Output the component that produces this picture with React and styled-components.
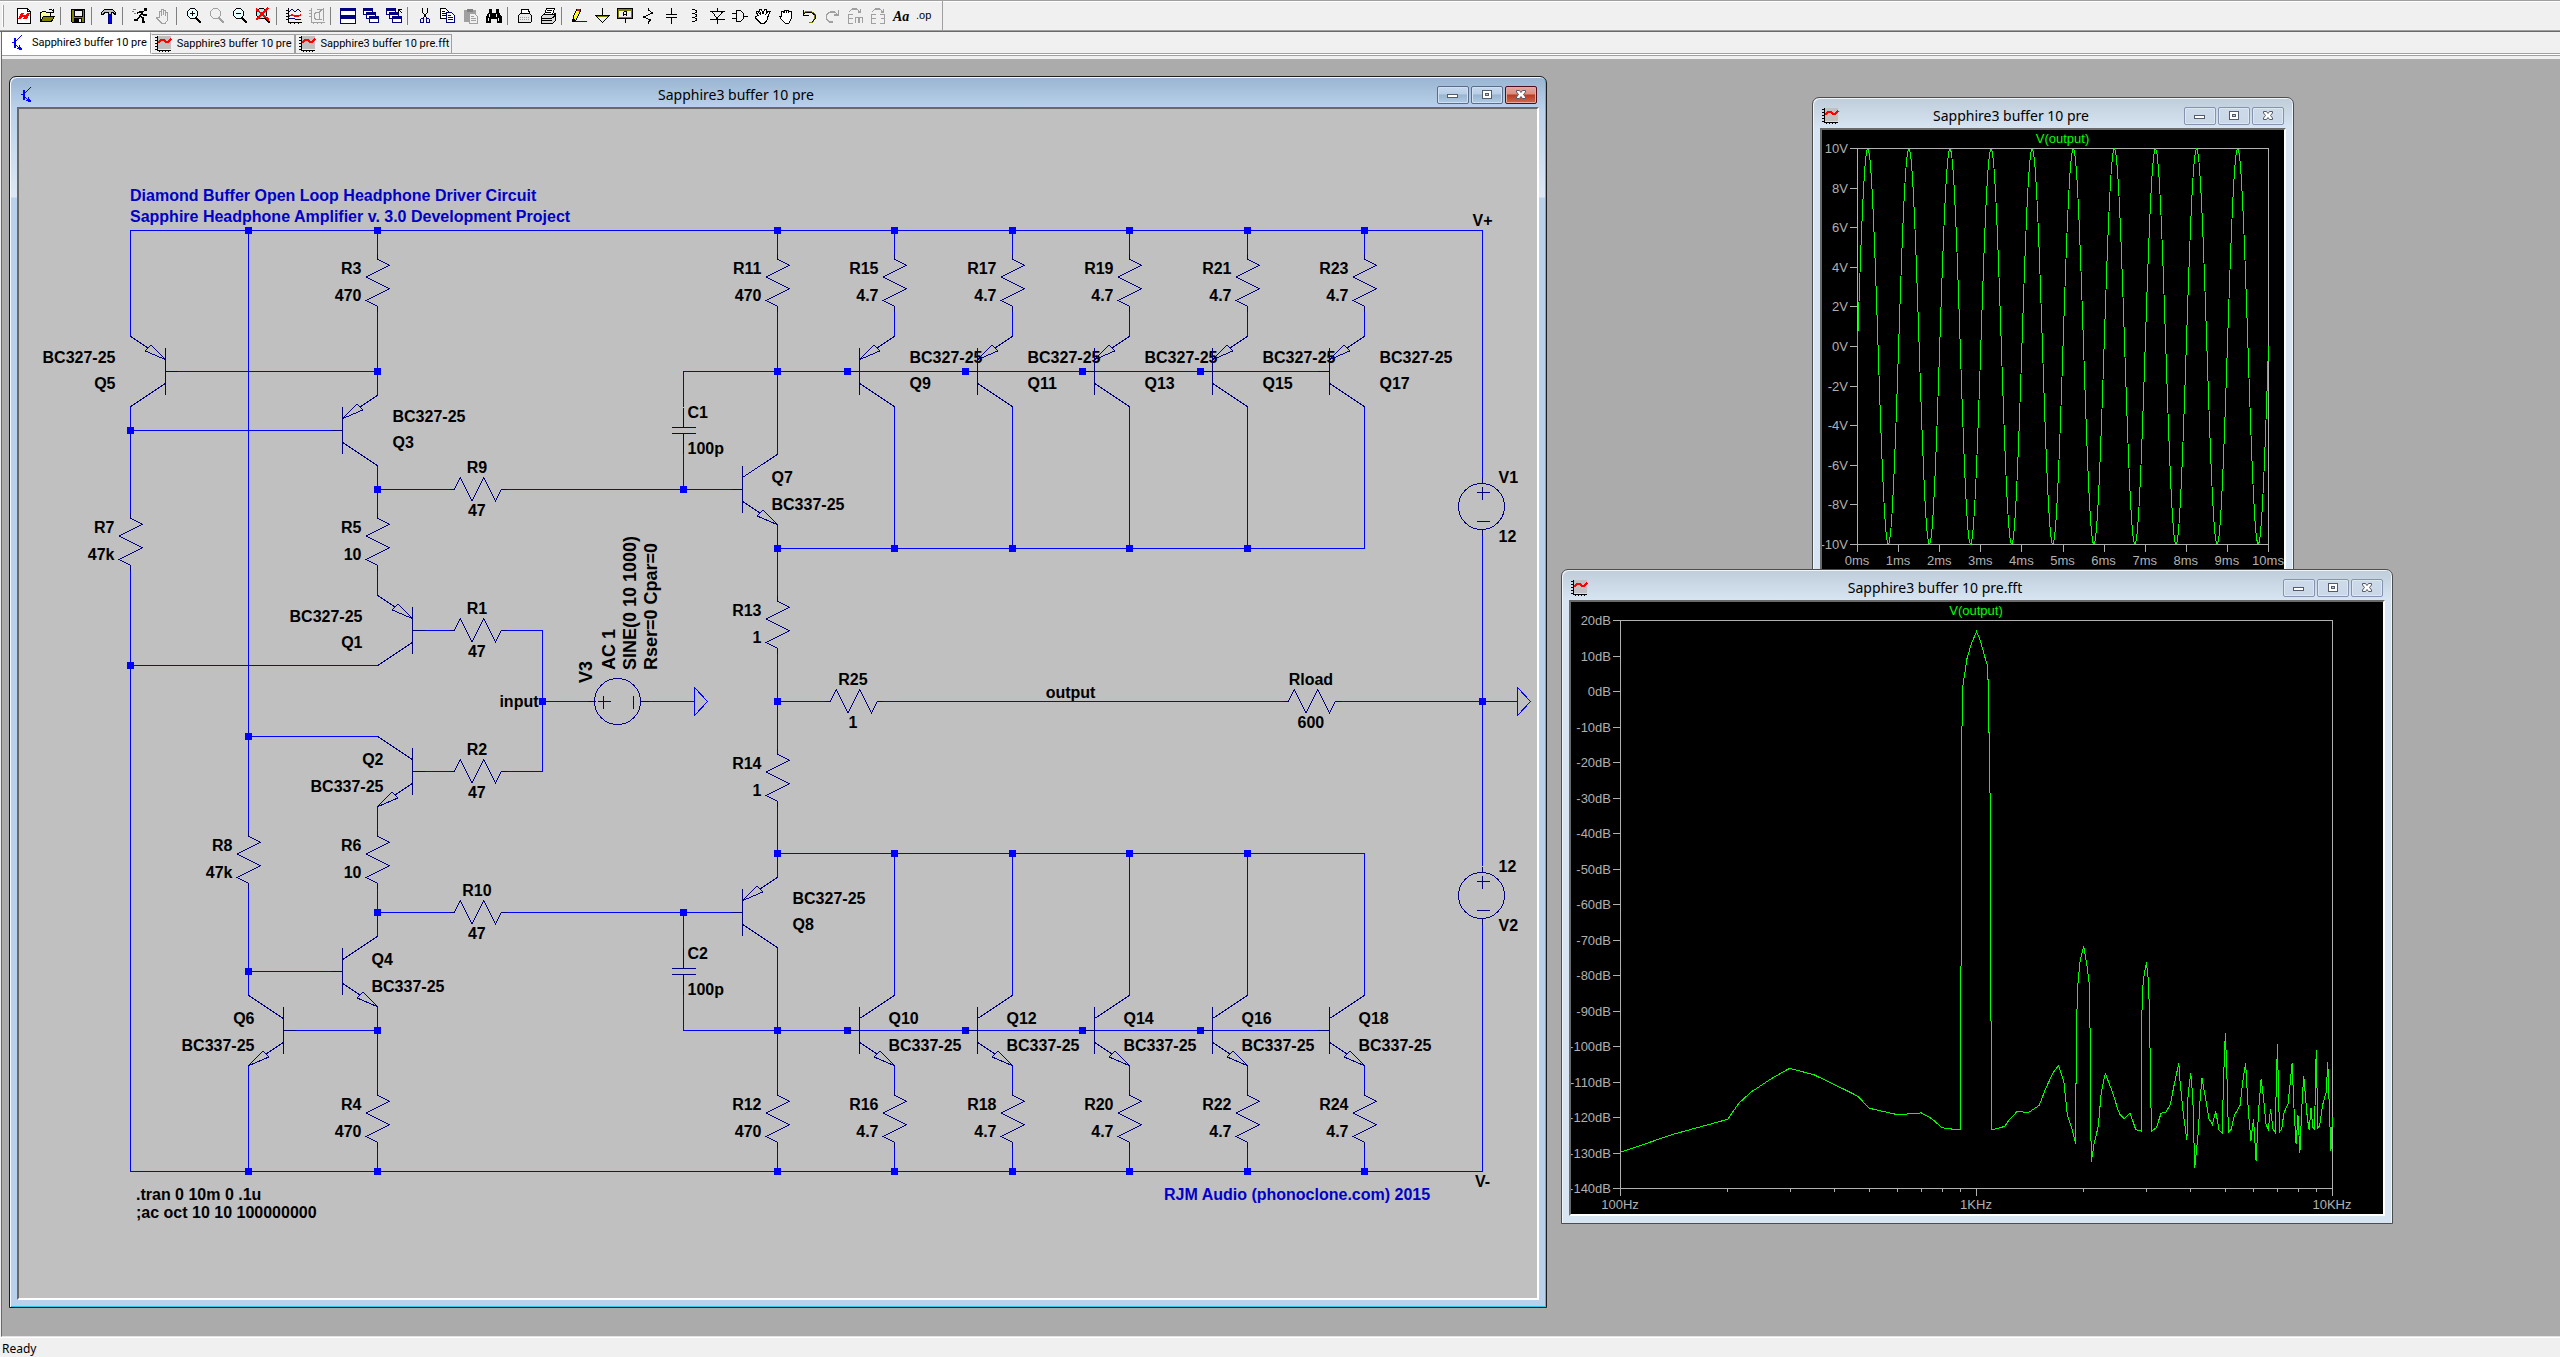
import React from "react";
import styled, { createGlobalStyle, css } from "styled-components";

const GlobalStyle = createGlobalStyle`
  *, *::before, *::after { box-sizing: border-box; }
  body { margin: 0; background: #f0f0f0; overflow: hidden; }
  button { font: inherit; color: inherit; padding: 0; margin: 0; }
`;

const uiFont = `"Noto Sans", "Open Sans", sans-serif`;
const plainFont = `"Liberation Sans", Arial, sans-serif`;

/* ---------- application shell ---------- */

const Shell = styled.div`
  display: flex;
  flex-direction: column;
  height: 100vh;
  background: #f0f0f0;
  font-family: ${uiFont};
  color: #000;
`;

const ToolbarRow = styled.header`
  display: flex;
  height: 32px;
  border-top: 1px solid #a0a0a0;
  border-bottom: 1px solid #696969;
  box-shadow: inset 0 1px 0 #fff, inset 0 -1px 0 #a0a0a0;
`;

const Toolbar = styled.div`
  display: flex;
  align-items: center;
  padding: 0 7px 0 2px;
  border-right: 1px solid #a0a0a0;
`;

const Grip = styled.span`
  width: 2px;
  height: 22px;
  margin-right: 8px;
  background: #fff;
  border-right: 1px solid #a0a0a0;
`;

const ToolButton = styled.button`
  display: flex;
  align-items: center;
  justify-content: center;
  width: 23px;
  height: 22px;
  border: 0;
  background: transparent;
`;

const Separator = styled.span`
  width: 1px;
  height: 18px;
  margin: 0 5px 0 2px;
  background: #808080;
`;

const Icon = styled.svg`
  display: block;
  width: 16px;
  height: 16px;
  flex: none;
  shape-rendering: crispEdges;
  fill: none;
  overflow: visible;
`;

const TabStrip = styled.nav`
  display: flex;
  align-items: flex-start;
  height: 27px;
  margin-left: 1px;
  border-left: 1px solid #696969;
  background: linear-gradient(
    #f0f0f0 21px, #a0a0a0 21px, #a0a0a0 22px, #fff 22px, #fff 23px,
    #a0a0a0 23px, #a0a0a0 24px, #f0f0f0 24px
  );
`;

const Tab = styled.button`
  display: flex;
  align-items: center;
  gap: 6px;
  font-family: Roboto, ${plainFont};
  font-size: 11px;
  line-height: 16px;
  white-space: nowrap;
  border: 1px solid #a0a0a0;
  ${(p) =>
    p.$active
      ? css`
          height: 22px;
          padding: 0 3px 0 7px;
          border-color: #fff #a0a0a0 #fff #fff;
          background: #fff;
        `
      : css`
          height: 20px;
          margin-top: 2px;
          padding: 0 2px 0 3px;
          border-left-color: ${p.$first ? "#fff" : "#a0a0a0"};
          background: #f0f0f0;
        `}
`;

const Desktop = styled.main`
  position: relative;
  flex: 1;
  overflow: hidden;
  margin-left: 1px;
  background: #ababab;
  border-left: 1px solid #696969;
  border-bottom: 1px solid #e3e3e3;
`;

const StatusBar = styled.footer`
  height: 20px;
  padding: 2px 2px 0;
  border-top: 1px solid #fff;
  font-size: 12px;
  line-height: 18px;
`;

/* ---------- MDI windows ---------- */

const Frame = styled.section`
  position: absolute;
  left: ${(p) => p.$x}px;
  top: ${(p) => p.$y}px;
  width: ${(p) => p.$w}px;
  height: ${(p) => p.$h}px;
  display: flex;
  flex-direction: column;
  padding: 0 7px 7px;
  border-radius: 7px 7px 0 0;
  ${(p) =>
    p.$active
      ? css`
          border: 1px solid #1c1c1c;
          background: linear-gradient(#99b4d1, #b9d1ea 30px, #dce8f5 120px, #b9d1ea 121px);
          box-shadow: inset 1px 1px 0 #f4f9ff, inset -1px -1px 0 #2fc6ec;
        `
      : css`
          border: 1px solid #4d4d4d;
          background: linear-gradient(#bfcddb, #d7e4f2 30px);
          box-shadow: inset 1px 1px 0 #f0f5fb, inset -1px 0 0 #f0f5fb;
        `}
`;

const TitleBar = styled.div`
  display: flex;
  align-items: center;
  height: 30px;
  flex: none;
  padding: 9px 2px 3px;
`;

const Title = styled.h2`
  flex: 1;
  margin: 0;
  text-align: center;
  font-size: 14px;
  line-height: 18px;
  font-weight: 400;
`;

const Controls = styled.div`
  display: flex;
  gap: 2px;
`;

const ControlButton = styled.button`
  display: flex;
  align-items: center;
  justify-content: center;
  width: 32px;
  height: 18px;
  border-radius: 2px;
  ${(p) =>
    p.$tone === "close"
      ? css`
          border: 1px solid #4f0e1c;
          background: linear-gradient(#e3a299 0 1px, #dc8d80 7px, #b93a20 8px, #cf6a55 16px);
          box-shadow: inset 0 0 0 1px #e6a99f;
        `
      : p.$tone === "active"
      ? css`
          border: 1px solid #5b6c8a;
          background: linear-gradient(#c6d9ed, #b8cee6 7px, #98b4d0 8px, #b1cbe4 16px);
          box-shadow: inset 0 0 0 1px #d2e1f1;
        `
      : css`
          border: 1px solid #8593b0;
          background: linear-gradient(#ccdaea, #c9d7e7);
          box-shadow: inset 0 0 0 1px #dce7f3;
        `}
`;

const Client = styled.div`
  flex: 1;
  min-height: 0;
  border: 2px solid;
  border-color: #696969 #fff #fff #696969;
  background: ${(p) => p.$bg};
`;

const Drawing = styled.svg`
  display: block;
  width: 100%;
  height: 100%;
`;

const glyphs = {
  minimize: <path d="M2.500 7.500h10v3h-10z" fill="#fff" stroke="#535a6c" />,
  maximize: (
    <>
      <path d="M3.500 3.500h9v8h-9z" fill="#fff" stroke="#535a6c" />
      <path d="M6.500 6.500h3v2h-3z" fill="#b8cbe0" stroke="#535a6c" />
    </>
  ),
  close: (
    <path
      d="M3.500 3.500h3L8 5.500l1.500-2h3v1.500L10.500 7.500l2 2.500v1.500h-3L8 9.500l-1.500 2h-3V10l2-2.500-2-2.500z"
      fill="#fff"
      stroke="#535a6c"
      shapeRendering="auto"
    />
  ),
};

function MdiWindow({ title, icon, active, bg, x, y, w, h, children }) {
  const tone = active ? "active" : "idle";
  return (
    <Frame $x={x} $y={y} $w={w} $h={h} $active={active} aria-label={title}>
      <TitleBar>
        <Icon viewBox="0 0 16 16">{icon}</Icon>
        <Title>{title}</Title>
        <Controls>
          <ControlButton $tone={tone} aria-label="Minimize">
            <Icon viewBox="0 0 16 16">{glyphs.minimize}</Icon>
          </ControlButton>
          <ControlButton $tone={tone} aria-label="Maximize">
            <Icon viewBox="0 0 16 16">{glyphs.maximize}</Icon>
          </ControlButton>
          <ControlButton $tone={active ? "close" : "idle"} aria-label="Close">
            <Icon viewBox="0 0 16 16">{glyphs.close}</Icon>
          </ControlButton>
        </Controls>
      </TitleBar>
      <Client $bg={bg}>{children}</Client>
    </Frame>
  );
}

/* ---------- icons ---------- */

const schematicIcon = (
  <>
    <path d="M2 7.500h4M5.500 6.500l6-6M5.500 9.500l6 6" stroke="#00f" />
    <path d="M4 3h2v10H4zM9 10h1v2h1v1h1v2h-3v-1h-2v-1h1v-1h1z" fill="#00f" />
  </>
);

const plotIcon = (
  <>
    <path d="M2 0h14v13H2z" fill="#c0c0c0" />
    <path d="M2 0v14h14M0 1.500h2M0 4.500h2M0 7.500h2M0 10.500h2M0 13.500h2M4.500 14v2M7.500 14v2M10.500 14v2M13.500 14v2" stroke="#000" />
    <path d="M3 7l3-3h3l2 2h2l3-3" stroke="#f00" strokeWidth="2" />
  </>
);

const G = "#a0a0a0";
const N = "#000080";

const lens = (color, tint) => (
  <>
    <path d="M4.500 .5h4l3 3v4l-3 3h-4l-3-3v-4z" stroke={color} fill={tint} />
    <path d="M10 10l5 5" stroke={color} strokeWidth="2.500" />
  </>
);

const cascade = (
  <>
    {[[0, 0], [3, 4], [6, 8]].map(([x, y]) => (
      <g key={x}>
        <path d={`M${x + 0.5} ${y + 0.5}h9v6h-9z`} fill="#fff" stroke={N} />
        <path d={`M${x} ${y}h10v3h-10z`} fill={N} />
      </g>
    ))}
  </>
);

const page = (x, y, fill, color) => (
  <>
    <path d={`M${x + 0.5} ${y + 0.5}h5l3 3v7h-8z`} fill={fill} stroke={color} />
    <path d={`M${x + 2} ${y + 3.5}h3M${x + 2} ${y + 5.5}h5M${x + 2} ${y + 7.5}h5`} stroke={color} />
  </>
);

const toolGroups = [
  [
    ["New schematic", <><path d="M1.500 .5h10l3 3v12h-13z" fill="#fff" stroke="#000" /><path d="M11.500 .5v3h3" stroke="#000" /><path d="M2 11l3-6h3l-1 2h2l2-2h3l-3 6h-4l1-2H6l-1 2z" fill="#f00" /></>],
    ["Open", <><path d="M1.500 13V4.500h1l1-1h3l1 1h4v3" fill="#ff9" stroke="#000" /><path d="M1.500 13.500l3-5h11l-3 5z" fill="#808000" stroke="#000" /><path d="M9.500 2.500l1-1h2l2 2M14.500 1v3h-3" stroke="#000" /></>],
  ],
  [["Save", <><path d="M1.500 1.500h13v13h-12l-1-1z" fill="#808000" stroke="#000" /><path d="M4 2h8v6H4z" fill="#f0f0f0" stroke="#000" /><path d="M4 10h8v5H4z" fill="#000" /><path d="M9 11h2v3H9z" fill="#f0f0f0" /></>]],
  [["Control panel", <><path d="M.5 4.500l3-3h8l3 3v2h-1l-1-2H10v2H7v-2H4l-2 2h-1z" fill="#c0c0c0" stroke="#000" /><path d="M7.500 6.500h3v9h-3z" fill="#00f" stroke={N} /></>]],
  [
    ["Run", <><path d="M12 0h3v3h-3z" fill="#000" /><path d="M11 3L8 8l3 2v4h2M8 8l-3 4H2M5 5l3-1 4 3h3M8 4h3" stroke="#000" strokeWidth="1.500" /><path d="M0 3h2M2 5h2M1 1h3" stroke="#808080" /></>],
    ["Halt", <><path d="M4.500 9V3.500h2V8M6.500 7V1.500h2V7M8.500 7V2.500h2V8M10.500 8V4.500h2V12l-2 3h-4l-5-5v-1h2l1 1" stroke={G} /></>],
  ],
  [
    ["Zoom in", <>{lens("#000", "#e4ffff")}<path d="M6.500 3v5M4 5.500h5" stroke="#000" strokeWidth="1.500" /></>],
    ["Pan", lens(G, "#f0f0f0")],
    ["Zoom out", <>{lens("#000", "#e4ffff")}<path d="M4 5.500h5" stroke="#000" strokeWidth="1.500" /></>],
    ["Zoom full extents", <>{lens("#000", "#8ff")}<path d="M1 1l13 11M13 0L1 12" stroke="#f00" strokeWidth="2" /></>],
  ],
  [
    ["Autorange", <><path d="M2 0v14h14M0 2.500h2M0 5.500h2M0 8.500h2M0 11.500h2M4.500 14v2M8.500 14v2M12.500 14v2" stroke="#000" /><path d="M3 4l3-3 3 3 3-3 3 3" stroke={N} /><path d="M3 8l3-1 3 1h3l3-1" stroke="#f00" strokeWidth="1.500" /><path d="M3 10.500h5l2 1h5" stroke={N} /></>],
    ["Plot limits", <><path d="M2 0v14h14M0 2.500h2M0 5.500h2M0 8.500h2M4.500 14v2M8.500 14v2M12.500 14v2M14.500 0v13M8 1.500h5l-3 3h-3l-2 2v3l2 2h6M10 4.500v6" stroke={G} /></>],
  ],
  [
    ["Tile windows", <><path d="M.5 .5h15v7H.5zM.5 8.500h15v7H.5z" fill="#fff" stroke={N} /><path d="M0 0h16v3H0zM0 8h16v3H0z" fill={N} /></>],
    ["Cascade windows", cascade],
    ["Close all", <>{cascade}<path d="M12 1.500h4M12.500 1v4M12 1l4 4" stroke="#000" /></>],
  ],
  [
    ["Cut", <><path d="M5.500 0v4l4 6M10.500 0v4l-4 6" stroke="#000" /><path d="M4.500 10.500h2v4h-3v-3zM9.500 10.500h2l1 1v3h-3z" stroke={N} /></>],
    ["Copy", <>{page(0, 0, "#fff", "#000")}{page(6, 4, "#fff", N)}</>],
    ["Paste", <><path d="M1 2h12v12H1z" fill={G} /><path d="M4 1h6v3H4z" fill="#808080" />{page(6, 5, "#f0f0f0", G)}</>],
    ["Find", <><path d="M3 1h3v4h4V1h3v3l3 5v6h-5v-4H5v4H0V9l3-5z" fill="#000" /><path d="M3.500 6v3M2.500 10v3M10.500 6v3M12.500 10v3" stroke="#f0f0f0" /></>],
  ],
  [
    ["Print setup", <><path d="M4.500 5.500v-4h7l1 4" fill="#fff" stroke="#000" /><path d="M1.500 7.500l2-2h9l2 2v6l-1 1h-12z" fill="#e8e8e8" stroke="#000" /><path d="M3 9.500h10M3 11.500h10" stroke="#a0a0a0" strokeDasharray="1 1" /></>],
    ["Print", <><path d="M4.500 6.500l2-6h8l-2 6" fill="#fff" stroke="#000" /><path d="M7 2.500h5M6 4.500h5" stroke="#000" /><path d="M1.500 8.500l2-2h10l2-1v7l-3 3h-11z" fill="#d8d8d8" stroke="#000" /><path d="M2 10.500h10M2 12.500h10M12.500 10l3-3" stroke="#000" /></>],
  ],
  [
    ["Wire", <><path d="M2 13.500h14" stroke="#00f" /><path d="M2 12V9l4-8h3v3l-4 8z" fill="#ff0" stroke="#000" /><path d="M6 1h3v3L6 3z" fill="#f00" /><path d="M1 11h3v3H1z" fill="#000" /></>],
    ["Ground", <><path d="M8.500 0v7" stroke="#000" /><path d="M1.500 7.500h14l-7 7z" fill="#f0f0f0" stroke="#000" /><path d="M3 8.500h11" stroke="#808000" /></>],
    ["Label net", <><path d="M1 1.500h14v8H1z" stroke="#808000" strokeWidth="2" /><path d="M.5 .5h15v10H.5zM8 11v4M6.500 8V4.500l1-1h2V8M6 6h4" stroke="#000" /></>],
    ["Resistor", <path d="M8.500 0v2l4 3-9 4 7 3-2 2v2" stroke="#000" />],
    ["Capacitor", <path d="M8.500 0v6M3 6.500h11M3 9.500h11M8.500 10v6" stroke="#000" />],
    ["Inductor", <path d="M6 1.500h2l2 1v2l-2 1H6h2l2 1v2l-2 1H6h2l2 1v2l-2 1H6" stroke="#000" />],
    ["Diode", <><path d="M8.500 0v3M1 3.500h15M3 3.500l5 7 6-7M1 11.500h15M8.500 12v4" stroke="#000" /></>],
    ["Component", <path d="M0 5.500h4M0 10.500h4M4.500 2.500h4l3 3v5l-3 3h-4zM12 8.500h4" stroke="#000" />],
    ["Move", <path d="M3.500 7.500L1.500 5V3.500H3L5.500 6.500l-1-5h2l1.500 4 1.500-4h2l-.5 4.500 2-2.500h2l-2 5-1 4-3 3h-3l-6-6v-1.500h2z" fill="#fff" stroke="#000" />],
    ["Drag", <path d="M3.500 8.500V4l1.500-1 1 2V2.500h2V5l1-3h1.500V5l1-2h1.500v8l-2 4h-4l-4-4-1-2.500z" fill="#fff" stroke="#000" />],
    ["Undo", <><path d="M2 6.500l3-3h5l4 3v4l-3 4h-3" stroke="#808000" strokeWidth="1.500" /><path d="M2.500 2v5.500h5M2 7l3-3h5l4 3v4l-3 3" stroke="#000" /></>],
    ["Redo", <path d="M14.500 2v5h-5M14 7l-3-3H6L2.500 7v4l3 3h3" stroke={G} strokeWidth="1.300" />],
    ["Mirror", <path d="M2 4l3-3h5l3 3M13.500 1v3h-3M6 6.500H1.500v9H6M1.500 10.500h4M8.500 15V9.500h7V15M12 9v6" stroke={G} strokeWidth="1.300" />],
    ["Rotate", <path d="M2 4l3-3h5l3 3M13.500 1v3h-3M6 6.500H1.500v9H6M1.500 10.500h4M10 6.500h4.500v9H10M14.500 10.500h-4" stroke={G} strokeWidth="1.300" />],
    ["Text", <text x="0" y="13" fill="#000" fontFamily="'Liberation Serif', serif" fontSize="14" fontWeight="700" fontStyle="italic">Aa</text>],
    ["SPICE directive", <text x="0" y="11" fill="#000" fontFamily="'Liberation Sans', sans-serif" fontSize="11">.op</text>],
  ],
];

/* ---------- schematic ---------- */

const WIRE = "#0000ff";
const PART = "#000080";
const STEP_X = 11.75;
const STEP_Y = 200 / 17;
const gx = (c) => Math.round(111.3 + c * STEP_X) + 0.5;
const gy = (r) => Math.round(120.95 + r * STEP_Y) + 0.5;
// component outlines are given in 1/16 of a grid step
const u = (n) => (n * STEP_X) / 16;

const Label = styled.text`
  font-family: ${plainFont};
  font-size: ${(p) => (p.$large ? 18 : 16)}px;
  font-weight: 700;
  fill: ${(p) => p.$fill || "#000"};
  stroke: none;
  text-anchor: ${(p) => p.$anchor || "start"};
`;

const poly = (ox, oy, pts) =>
  "M" + pts.map(([x, y]) => `${(ox + u(x)).toFixed(2)} ${(oy + u(y)).toFixed(2)}`).join("L");

const ZIG = [[0, 0], [0, 8], [16, 16], [-16, 32], [16, 48], [-16, 64], [0, 72], [0, 80]];

function ResistorV({ c, r, name, value }) {
  const x = gx(c), y = gy(r);
  return (
    <g>
      <path d={poly(x, y, ZIG)} />
      <Label x={x - 16} y={y + 20} $anchor="end">{name}</Label>
      <Label x={x - 16} y={y + 47} $anchor="end">{value}</Label>
    </g>
  );
}

function ResistorH({ c, r, name, value }) {
  const x = gx(c), y = gy(r);
  return (
    <g>
      <path d={poly(x, y, ZIG.map(([a, b]) => [b, -a]))} />
      <Label x={x + u(40) - 1} y={y - 17} $anchor="middle">{name}</Label>
      <Label x={x + u(40) - 1} y={y + 26} $anchor="middle">{value}</Label>
    </g>
  );
}

// c,r: base pin; dir 1 puts collector and emitter to the right of the base
function Transistor({ c, r, dir = 1, pnp, name }) {
  const x = gx(c), y = gy(r);
  const m = (pts) => pts.map(([a, b]) => [a * dir, b]);
  const e = pnp ? -1 : 1;
  const head = pnp
    ? [[16, -16], [36, -36], [44, -28], [16, -16]]
    : [[64, 48], [44, 28], [36, 36], [64, 48]];
  const shaft = pnp ? [[64, -48], [40, -32]] : [[16, 16], [40, 32]];
  const tx = x + dir * (u(64) + (pnp ? 15 : -6));
  const anchor = dir > 0 ? "start" : "end";
  const model = pnp ? "BC327-25" : "BC337-25";
  return (
    <g>
      <path d={poly(x, y, m([[0, 0], [16, 0]]))} />
      <path d={poly(x, y, m([[16, -32], [16, 32]]))} />
      <path d={poly(x, y, m([[16, -16 * e], [64, -48 * e]]))} />
      <path d={poly(x, y, m(shaft))} />
      <path d={poly(x, y, m(head))} />
      <Label x={tx} y={pnp ? y - 9 : y - 7} $anchor={anchor}>{pnp ? model : name}</Label>
      <Label x={tx} y={pnp ? y + 17 : y + 20} $anchor={anchor}>{pnp ? name : model}</Label>
    </g>
  );
}

function Capacitor({ c, r, name, value }) {
  const x = gx(c), y = gy(r);
  return (
    <g>
      <path d={`M${x} ${y - 23}v20M${x - 12} ${y - 3}h24M${x - 12} ${y + 3}h24M${x} ${y + 3}v20`} />
      <Label x={x + 4} y={y - 13}>{name}</Label>
      <Label x={x + 4} y={y + 23}>{value}</Label>
    </g>
  );
}

function Source({ x, y, horizontal }) {
  return (
    <g>
      <circle cx={x - 1} cy={y} r="23" />
      {horizontal ? (
        <path d={`M${x - 31} ${y}h8M${x + 22} ${y}h8M${x - 21} ${y}h13M${x - 15} ${y - 6}v13M${x + 15} ${y - 6}v13`} />
      ) : (
        <path d={`M${x} ${y - 29}v6M${x} ${y + 23}v6M${x - 6} ${y - 14}h13M${x} ${y - 20}v13M${x - 6} ${y + 15}h13`} />
      )}
    </g>
  );
}

const legs = [65, 75, 85, 95, 105];

const wires = [
  [0, 0, 115, 0], [0, 80, 115, 80],
  [0, 0, 0, 9], [0, 15, 0, 24], [0, 29, 0, 80],
  [10, 0, 10, 51], [10, 56, 10, 65], [10, 71, 10, 80],
  [21, 0, 21, 2], [21, 7, 21, 14], [21, 20, 21, 24], [21, 29, 21, 31],
  [21, 49, 21, 51], [21, 56, 21, 60], [21, 66, 21, 73], [21, 78, 21, 80],
  [4, 12, 21, 12], [0, 17, 17, 17], [0, 37, 21, 37], [10, 43, 21, 43], [10, 63, 17, 63], [14, 68, 21, 68],
  [21, 22, 27, 22], [32, 22, 51, 22], [21, 58, 27, 58], [32, 58, 51, 58],
  [25, 34, 27, 34], [32, 34, 35, 34], [35, 34, 35, 46], [32, 46, 35, 46], [25, 46, 27, 46],
  [35, 40, 39, 40], [44, 40, 48, 40],
  [47, 12, 47, 15], [47, 19, 47, 22], [47, 58, 47, 61], [47, 65, 47, 68],
  [55, 0, 55, 2], [55, 7, 55, 19], [55, 25, 55, 31], [55, 36, 55, 44], [55, 49, 55, 55],
  [55, 61, 55, 73], [55, 78, 55, 80],
  [47, 12, 101, 12], [47, 68, 101, 68], [55, 27, 105, 27], [55, 53, 105, 53],
  [55, 40, 59, 40], [64, 40, 98, 40], [103, 40, 118, 40],
  [115, 0, 115, 21], [115, 26, 115, 54], [115, 59, 115, 80],
  ...legs.flatMap((c) => [
    [c, 0, c, 2], [c, 7, c, 9], [c, 15, c, 27], [c, 53, c, 65], [c, 71, c, 73], [c, 78, c, 80],
  ]),
];

const junctions = [
  ...[10, 21, 55, ...legs].flatMap((c) => [[c, 0], [c, 80]]),
  ...[55, 65, 75, 85, 95].flatMap((c) => [[c, 27], [c, 53]]),
  ...[55, 61, 71, 81, 91].flatMap((c) => [[c, 12], [c, 68]]),
  [21, 12], [0, 17], [21, 22], [47, 22], [0, 37], [35, 40], [55, 40], [115, 40],
  [10, 43], [21, 58], [47, 58], [10, 63], [21, 68],
];

function Schematic() {
  const v3x = gx(41.5), v3y = gy(40);
  const vx = gx(115);
  return (
    <Drawing viewBox="0 0 1518 1189" role="img" aria-label="Diamond buffer schematic">
      <g fill="none" shapeRendering="crispEdges" stroke={WIRE}>
        {wires.map(([a, b, c, d], i) => (
          <path key={i} d={`M${gx(a)} ${gy(b)}L${gx(c)} ${gy(d)}`} strokeLinecap="square" />
        ))}
        {[48, 118].map((c) => (
          <path key={c} d={`M${gx(c)} ${v3y - 14}v28l13 -14z`} />
        ))}
        {junctions.map(([c, r], i) => (
          <rect key={i} x={gx(c) - 3.5} y={gy(r) - 3.5} width="7" height="7" fill={WIRE} stroke="none" />
        ))}
      </g>
      <g fill="none" stroke={PART} shapeRendering="crispEdges">
        <ResistorV c={21} r={2} name="R3" value="470" />
        <ResistorV c={0} r={24} name="R7" value="47k" />
        <ResistorV c={21} r={24} name="R5" value="10" />
        <ResistorV c={10} r={51} name="R8" value="47k" />
        <ResistorV c={21} r={51} name="R6" value="10" />
        <ResistorV c={21} r={73} name="R4" value="470" />
        <ResistorV c={55} r={2} name="R11" value="470" />
        <ResistorV c={55} r={31} name="R13" value="1" />
        <ResistorV c={55} r={44} name="R14" value="1" />
        <ResistorV c={55} r={73} name="R12" value="470" />
        <ResistorH c={27} r={22} name="R9" value="47" />
        <ResistorH c={27} r={34} name="R1" value="47" />
        <ResistorH c={27} r={46} name="R2" value="47" />
        <ResistorH c={27} r={58} name="R10" value="47" />
        <ResistorH c={59} r={40} name="R25" value="1" />
        <ResistorH c={98} r={40} name="Rload" value="600" />
        <Transistor c={4} r={12} dir={-1} pnp name="Q5" />
        <Transistor c={17} r={17} pnp name="Q3" />
        <Transistor c={25} r={34} dir={-1} pnp name="Q1" />
        <Transistor c={25} r={46} dir={-1} name="Q2" />
        <Transistor c={17} r={63} name="Q4" />
        <Transistor c={14} r={68} dir={-1} name="Q6" />
        <Transistor c={51} r={22} name="Q7" />
        <Transistor c={51} r={58} pnp name="Q8" />
        {legs.map((c, i) => (
          <g key={c}>
            <ResistorV c={c} r={2} name={`R${15 + 2 * i}`} value="4.7" />
            <ResistorV c={c} r={73} name={`R${16 + 2 * i}`} value="4.7" />
            <Transistor c={c - 4} r={12} pnp name={`Q${9 + 2 * i}`} />
            <Transistor c={c - 4} r={68} name={`Q${10 + 2 * i}`} />
          </g>
        ))}
        <Capacitor c={47} r={17} name="C1" value="100p" />
        <Capacitor c={47} r={63} name="C2" value="100p" />
        <Source x={vx} y={gy(23.5)} />
        <Source x={vx} y={gy(56.5)} />
        <Source x={v3x} y={v3y} horizontal />
      </g>
      <Label x={vx + 16} y={gy(23.5) - 24}>V1</Label>
      <Label x={vx + 16} y={gy(23.5) + 35}>12</Label>
      <Label x={vx + 16} y={gy(56.5) - 24}>12</Label>
      <Label x={vx + 16} y={gy(56.5) + 35}>V2</Label>
      <Label x={vx} y={gy(0) - 5} $anchor="middle">V+</Label>
      <Label x={vx} y={gy(80) + 15} $anchor="middle">V-</Label>
      <Label x={gx(35) - 4} y={v3y + 5} $anchor="end">input</Label>
      <Label x={gx(80)} y={v3y - 4} $anchor="middle">output</Label>
      <Label $large transform="translate(573 574) rotate(-90)">V3</Label>
      <Label $large transform="translate(596 561) rotate(-90)">AC 1</Label>
      <Label $large transform="translate(617 561) rotate(-90)">SINE(0 10 1000)</Label>
      <Label $large transform="translate(638 561) rotate(-90)">Rser=0 Cpar=0</Label>
      <Label x="111" y="92" $fill="#0000c8">Diamond Buffer Open Loop Headphone Driver Circuit</Label>
      <Label x="111" y="113" $fill="#0000c8">Sapphire Headphone Amplifier v. 3.0 Development Project</Label>
      <Label x="1145" y="1091" $fill="#0000c8">RJM Audio (phonoclone.com) 2015</Label>
      <Label x="117" y="1091">.tran 0 10m 0 .1u</Label>
      <Label x="117" y="1109">;ac oct 10 10 100000000</Label>
    </Drawing>
  );
}

/* ---------- waveform plots ---------- */

const AXIS = "#b0b0b0";

const PlotText = styled.text`
  font-family: ${plainFont};
  font-size: 13px;
  fill: ${(p) => p.$fill || AXIS};
  text-anchor: ${(p) => p.$anchor || "middle"};
`;

function Plot({ width, height, box, yLabels, xTicks, trace, label }) {
  const [l, t, r, b] = box;
  return (
    <Drawing viewBox={`0 0 ${width} ${height}`} role="img" aria-label={label}>
      <PlotText x={(l + r) / 2} y="13" $fill="#00ff00">V(output)</PlotText>
      <g stroke={AXIS} fill="none" shapeRendering="crispEdges">
        <path d={`M${l + 0.5} ${t + 0.5}H${r + 0.5}V${b + 0.5}H${l + 0.5}z`} />
        {yLabels.map((s, i) => {
          const y = Math.round(t + ((b - t) * i) / (yLabels.length - 1)) + 0.5;
          return <path key={s} d={`M${l - 7} ${y}h7`} />;
        })}
        {xTicks.map(({ at, text }) => (
          <path key={at} d={`M${Math.round(l + (r - l) * at) + 0.5} ${b}v${text ? 8 : 4}`} />
        ))}
      </g>
      {yLabels.map((s, i) => (
        <PlotText key={s} x={l - 9} y={Math.round(t + ((b - t) * i) / (yLabels.length - 1)) + 5} $anchor="end">
          {s}
        </PlotText>
      ))}
      {xTicks.filter((k) => k.text).map(({ at, text }) => (
        <PlotText key={text} x={l + (r - l) * at} y={b + 21}>{text}</PlotText>
      ))}
      <polyline points={trace} fill="none" stroke="#00ff00" shapeRendering="crispEdges" />
    </Drawing>
  );
}

const timeBox = [35, 18, 446, 414];
const timeTrace = Array.from({ length: 823 }, (_, i) => {
  const x = timeBox[0] + i / 2;
  const phase = ((i / 822) * 10) * 2 * Math.PI;
  return `${x + 0.5},${(216.5 - 197.5 * Math.sin(phase)).toFixed(1)}`;
}).join(" ");

// [frequency / 100 Hz, level in dB]
const spectrum = [
  [1, -129.8], [1.4, -124.8], [2, -120.5], [2.15, -116], [2.33, -112.8], [2.65, -109.1], [2.95, -106.4], [3, -106.2],
  [3.5, -108], [4, -110.8], [4.5, -113.3], [4.65, -114.1], [5, -117.4], [6, -119.2], [7, -118.7], [7.5, -120.4],
  [8, -122.9], [8.9, -123.5], [9.02, -123.5], [9.04, -92.7], [9.07, -31.9], [9.12, 0.3], [9.2, 3], [9.3, 5.9],
  [9.4, 9.2], [9.67, 13.4], [10, 16.9], [10.25, 14.4], [10.56, 9.7], [10.7, 7.8], [10.8, 1.7], [10.87, -20],
  [10.93, -31.2], [10.98, -92.7], [11.03, -123.5], [12, -122.5], [12.35, -120.7], [13, -118.3], [14, -118.6],
  [15, -116.6], [15.6, -112.1], [16.4, -107.4], [17, -105.4], [17.6, -110], [18, -119.4], [18.6, -123.7], [19, -127.5],
  [19.07, -95.5], [19.25, -82.8], [19.55, -75.8], [20, -71.8], [20.4, -76.7], [20.75, -82.8], [20.85, -96.4],
  [21, -132.6], [21.4, -127.4], [22, -122.3], [22.4, -112.9], [23, -107.6], [24, -112.4], [25, -118], [25.3, -119.2],
  [26, -120.4], [27, -118.7], [28, -123.4], [29, -123.8], [29.1, -92.7], [29.4, -81.4], [30, -76.3], [30.4, -81.4],
  [30.6, -89.9], [31, -123.8], [32, -122.9], [33, -118.8], [34, -118.6], [35, -116.4], [36, -110.3], [37, -104.7],
  [37.3, -109.6], [38, -118], [39, -126.4], [39.3, -113.3], [40, -107.6], [40.5, -114.3], [41, -134.3], [42, -123.7],
  [42.5, -114.3], [43, -109], [44, -114.7], [45, -120.4], [46, -122], [47, -118.3], [48, -123.5], [49, -124.4],
  [49.4, -109.6], [50, -96.1], [50.4, -104.9], [51, -124.1], [52, -123.2], [53, -119.4], [54, -118], [55, -116.6],
  [56, -109.6], [57, -104.7], [58, -118], [59, -126.5], [60, -120.3], [61, -132.3], [62, -118], [63, -109.3],
  [64, -114.3], [65, -121.8], [66, -123.4], [67, -117.7], [68, -123.2], [69, -124.1], [70, -99.4], [71, -124.1],
  [72, -123.2], [73, -119], [74, -117.3], [75, -116.2], [76, -110.5], [77, -104.7], [78, -118], [79, -127.5],
  [80, -119.4], [81, -130], [82, -117.1], [83, -108.2], [84, -114.3], [85, -120.4], [86, -123.4], [87, -117.3],
  [88, -122.7], [89, -123.4], [90, -101.1], [91, -123], [92, -122.3], [93, -119], [94, -116.2], [95, -114.3],
  [96, -113], [97, -104.4], [98, -118], [99, -129.5], [100, -119.9],
];

const fftBox = [49, 18, 761, 586];
const fftTrace = spectrum
  .map(([f, db]) => {
    const x = fftBox[0] + (fftBox[2] - fftBox[0]) * (Math.log10(f) / 2);
    const y = fftBox[1] + (20 - db) * 3.55;
    return `${(x + 0.5).toFixed(1)},${(y + 0.5).toFixed(1)}`;
  })
  .join(" ");

const voltLabels = Array.from({ length: 11 }, (_, i) => `${10 - 2 * i}V`);
const dbLabels = Array.from({ length: 17 }, (_, i) => `${20 - 10 * i}dB`);
const timeTicks = Array.from({ length: 11 }, (_, i) => ({ at: i / 10, text: `${i}ms` }));
const named = { 1: "100Hz", 10: "1KHz", 100: "10KHz" };
const freqTicks = [1, 2, 3, 4, 5, 6, 7, 8, 9, 10, 20, 30, 40, 50, 60, 70, 80, 90, 100].map((f) => ({
  at: Math.log10(f) / 2,
  text: named[f],
}));

/* ---------- application ---------- */

export default function App() {
  return (
    <Shell>
      <GlobalStyle />
      <ToolbarRow>
        <Toolbar role="toolbar" aria-label="Main">
          <Grip />
          {toolGroups.map((group, i) => (
            <React.Fragment key={i}>
              {i > 0 && <Separator />}
              {group.map(([name, art]) => (
                <ToolButton key={name} aria-label={name}>
                  <Icon viewBox="0 0 16 16">{art}</Icon>
                </ToolButton>
              ))}
            </React.Fragment>
          ))}
        </Toolbar>
      </ToolbarRow>
      <TabStrip role="tablist" aria-label="Documents">
        <Tab role="tab" aria-selected="true" $active>
          <Icon viewBox="0 0 16 16">{schematicIcon}</Icon>
          Sapphire3 buffer 10 pre
        </Tab>
        <Tab role="tab" aria-selected="false" $first>
          <Icon viewBox="0 0 16 16">{plotIcon}</Icon>
          Sapphire3 buffer 10 pre
        </Tab>
        <Tab role="tab" aria-selected="false">
          <Icon viewBox="0 0 16 16">{plotIcon}</Icon>
          Sapphire3 buffer 10 pre.fft
        </Tab>
      </TabStrip>
      <Desktop>
        <MdiWindow title="Sapphire3 buffer 10 pre" icon={schematicIcon} active bg="#c0c0c0" x={7} y={17} w={1538} h={1232}>
          <Schematic />
        </MdiWindow>
        <MdiWindow title="Sapphire3 buffer 10 pre" icon={plotIcon} bg="#000" x={1810} y={38} w={482} h={483}>
          <Plot width={462} height={440} box={timeBox} yLabels={voltLabels} xTicks={timeTicks} trace={timeTrace} label="Output voltage over time" />
        </MdiWindow>
        <MdiWindow title="Sapphire3 buffer 10 pre.fft" icon={plotIcon} bg="#000" x={1559} y={510} w={832} h={655}>
          <Plot width={812} height={612} box={fftBox} yLabels={dbLabels} xTicks={freqTicks} trace={fftTrace} label="Output spectrum" />
        </MdiWindow>
      </Desktop>
      <StatusBar>Ready</StatusBar>
    </Shell>
  );
}
